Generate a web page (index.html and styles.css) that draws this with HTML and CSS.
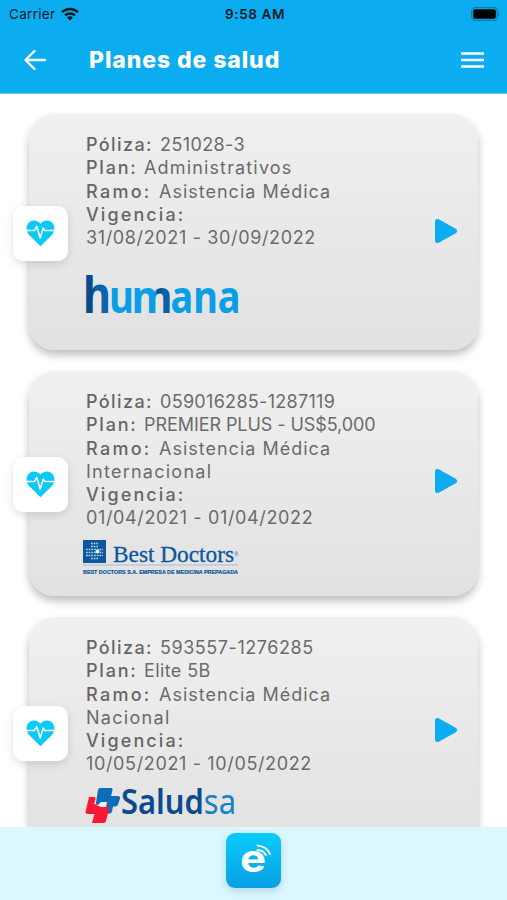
FILE: index.html
```html
<!DOCTYPE html>
<html lang="es">
<head>
<meta charset="utf-8">
<meta name="viewport" content="width=device-width, initial-scale=1">
<title>Planes de salud</title>
<link rel="stylesheet" href="styles.css">
</head>
<body>
<svg class="defs" aria-hidden="true">
  <symbol id="heart" viewBox="0 0 29 27">
    <path d="M14.5 26.2 3.1 14.9C-1.5 10.2 .3 .5 8 .5c3 0 5 1.3 6.5 3.2C16 1.800 18 .5 21 .5c7.700 0 9.500 9.700 4.900 14.400Z" fill="#0cc9f7"/>
    <path d="M0 10.500h8.500l2.200-4.200 3.500 11.700 3-10 1.300 2.500H29" fill="none" stroke="#fff" stroke-width="1.500" stroke-linejoin="round"/>
  </symbol>
  <symbol id="play" viewBox="0 0 24 26">
    <path d="M3.500 3.500v19l17-9.500Z" fill="#0cadf0" stroke="#0cadf0" stroke-width="5" stroke-linejoin="round"/>
  </symbol>
  <linearGradient id="m-fill">
    <stop offset=".6" stop-color="#0a9fe5"/>
    <stop offset=".62" stop-color="#084b8b"/>
    <stop offset=".8" stop-color="#0760a8"/>
  </linearGradient>
  <linearGradient id="h-fill">
    <stop offset=".3" stop-color="#084b8b"/>
    <stop offset=".5" stop-color="#0863ab"/>
  </linearGradient>
</svg>
<div class="app">
  <header class="top">
    <div class="status">
      <span class="carrier">Carrier
        <svg class="wifi" width="18" height="14" viewBox="0 0 18 14"><g fill="none" stroke="#071923" stroke-width="2.500"><path d="M1 5.200a11.400 11.400 0 0 1 16 0"/><path d="M4 8.400a7.200 7.200 0 0 1 10 0"/></g><path d="M9 13.500 6 10.600a4.200 4.200 0 0 1 6 0Z" fill="#071923"/></svg>
      </span>
      <span class="clock">9:58 AM</span>
      <svg class="battery" width="30" height="14" viewBox="0 0 30 14"><rect x=".7" y=".7" width="25.600" height="12.600" rx="3.500" fill="none" stroke="#087ead" stroke-width="1.300"/><rect x="2.200" y="2.200" width="22.600" height="9.600" rx="2" fill="#000"/><path d="M27.300 4.500q2.400 2.500 0 5Z" fill="#087ead"/></svg>
    </div>
    <nav class="bar">
      <svg width="22" height="20" viewBox="0 0 22 20"><path d="M21 10H2M10.500 1 1.500 10l9 9" fill="none" stroke="#fff" stroke-width="2.300" stroke-linecap="round" stroke-linejoin="round"/></svg>
      <h1>Planes de salud</h1>
      <svg class="menu" width="23" height="16" viewBox="0 0 23 16"><path d="M0 1.500h23M0 8h23M0 14.500h23" stroke="#fff" stroke-width="2.500"/></svg>
    </nav>
  </header>

  <main class="list">
    <article class="card first">
      <div class="tile"><svg width="29" height="27"><use href="#heart"/></svg></div>
      <div class="body">
        <p><b class="poliza">Póliza:</b><span class="num-a">251028-3</span></p>
        <p><b class="plan">Plan:</b><span class="adm">Administrativos</span></p>
        <p><b class="ramo">Ramo:</b><span class="asis">Asistencia Médica</span></p>
        <p><b class="vig">Vigencia:</b></p>
        <p><span class="date">31/08/2021 - 30/09/2022</span></p>
        <svg class="logo humana" width="154" height="44" viewBox="0 0 154 44">
          <text class="hum-h" x="-3" y="39.500" textLength="28" lengthAdjust="spacingAndGlyphs">h</text>
          <text class="hum" x="23" y="39.500" textLength="25" lengthAdjust="spacingAndGlyphs">u</text>
          <text class="hum hum-m" x="45.500" y="39.500" textLength="41" lengthAdjust="spacingAndGlyphs">m</text>
          <text class="hum" x="84.500" y="39.500" textLength="70" lengthAdjust="spacingAndGlyphs">ana</text>
        </svg>
      </div>
      <svg class="go" width="24" height="26"><use href="#play"/></svg>
    </article>

    <article class="card second">
      <div class="tile"><svg width="29" height="27"><use href="#heart"/></svg></div>
      <div class="body">
        <p><b class="poliza">Póliza:</b><span class="num-b">059016285-1287119</span></p>
        <p><b class="plan">Plan:</b><span class="premier">PREMIER PLUS - US$5,000</span></p>
        <p><b class="ramo">Ramo:</b><span class="asis">Asistencia Médica</span></p>
        <p><span class="inter">Internacional</span></p>
        <p><b class="vig">Vigencia:</b></p>
        <p><span class="date">01/04/2021 - 01/04/2022</span></p>
        <svg class="logo doctors" width="158" height="36" viewBox="0 0 158 36">
          <rect x="1" width="23" height="23" fill="#0b569c"/>
          <path d="M9 3.500h7M9 6.500h7M4 9.500h17M4 12.500h17M4 15.500h17M9 18.500h7" stroke="#b9d8ec" stroke-width="1.700" stroke-dasharray="1.700 1"/>
          <circle cx="15.500" cy="11.500" r="2" fill="#d9edf8"/>
          <text class="serif" x="31" y="21.800" textLength="121" lengthAdjust="spacingAndGlyphs">Best Doctors</text>
          <text class="reg" x="152.500" y="16">®</text>
          <path d="M1 25h155" stroke="#a9bdcf"/>
          <text class="tiny" x="1" y="33.500" textLength="155" lengthAdjust="spacingAndGlyphs">BEST DOCTORS S.A. EMPRESA DE MEDICINA PREPAGADA</text>
        </svg>
      </div>
      <svg class="go" width="24" height="26"><use href="#play"/></svg>
    </article>

    <article class="card third">
      <div class="tile"><svg width="29" height="27"><use href="#heart"/></svg></div>
      <div class="body">
        <p><b class="poliza">Póliza:</b><span class="num-c">593557-1276285</span></p>
        <p><b class="plan">Plan:</b><span class="elite">Elite 5B</span></p>
        <p><b class="ramo">Ramo:</b><span class="asis">Asistencia Médica</span></p>
        <p><span class="nac">Nacional</span></p>
        <p><b class="vig">Vigencia:</b></p>
        <p><span class="date">10/05/2021 - 10/05/2022</span></p>
        <svg class="logo saludsa" width="154" height="38" viewBox="0 0 154 38">
          <path d="M15 1h11q2 0 1.500 2L26 9h7q2.500 0 2 2.500l-2 6q-.7 2-3 2h-2l-1 5q-.5 2-2.500 2H17q-2 0-1.500-2L17 18h-4q-2.500 0-2-2.500L13 3q.5-2 2-2Z" fill="#0d6db8"/>
          <path d="M4 10h5q2 0 1.500 2L9 17h7l2-2 4 2-1 3h2q1.500 0 1 2l-3 12q-.5 2-2.500 2H7l2.500-9H3q-3 0-2.300-3Z" fill="#fb1834"/>
          <path d="m9 17 4 1 3-3h6l-1 5h-5Z" fill="#e8f3f8"/>
          <text class="salud" x="36" y="27" textLength="115" lengthAdjust="spacingAndGlyphs">Salud<tspan class="sa">sa</tspan></text>
        </svg>
      </div>
      <svg class="go" width="24" height="26"><use href="#play"/></svg>
    </article>
  </main>

  <footer class="dock">
    <div class="home">
      <svg width="55" height="55" viewBox="0 0 55 55"><text class="e" x="14" y="38.500" textLength="26" lengthAdjust="spacingAndGlyphs">e</text><path d="M31.500 12.500q9 .8 12.500 8.500M31.500 17q6 .3 8.300 5" fill="none" stroke="#e8faff" stroke-width="2" stroke-linecap="round"/></svg>
    </div>
  </footer>
</div>
</body>
</html>
```
FILE: styles.css
```css
* { box-sizing: border-box; }
body { margin: 0; background: #fff; font-family: Inter, "Liberation Sans", sans-serif; }
.defs { position: absolute; width: 0; height: 0; }
.app { height: 900px; display: flex; flex-direction: column; overflow: hidden; }

.top { flex: none; height: 94px; background: #0cadf0; border-bottom: 1px solid #66cef6; }
.status { height: 28px; display: grid; grid-template-columns: 1fr auto 1fr; align-items: center; padding: 0 6px 0 9px; color: #071923; font-size: 13.5px; }
.carrier { display: flex; align-items: center; gap: 6px; letter-spacing: .3px; }
.clock { font-weight: 600; font-size: 13.5px; letter-spacing: .6px; }
.battery { justify-self: end; }
.bar { display: flex; align-items: center; height: 63px; padding: 0 23px 0 24px; }
.bar h1 { margin: 0 0 0 43px; color: #fff; font-size: 23px; font-weight: 800; line-height: 30px; letter-spacing: .9px; }
.menu { margin-left: auto; }

.list { flex: 1; min-height: 0; overflow: hidden; padding: 20px 29px 0; display: flex; flex-direction: column; gap: 21px; }
.card { flex: none; display: flex; width: 449px; border-radius: 26px; background: linear-gradient(#f0f0f0, #e1e1e1); box-shadow: 0 5px 9px rgba(0, 0, 0, .26); }
.first { height: 236px; }
.second { height: 225px; }
.third { height: 236px; }
.tile { flex: none; width: 55px; height: 55px; margin: 92px 18px 0 -16px; border-radius: 10px; background: #fff; display: grid; place-items: center; box-shadow: 0 3px 8px rgba(0, 0, 0, .13); }
.second .tile { margin-top: 86px; }
.third .tile { margin-top: 89px; }
.body { flex: 1; padding-top: 19.2px; color: #6b6b6b; font-size: 18px; }
.body p { margin: 0; height: 23.2px; line-height: 23.2px; white-space: nowrap; }
.body b { display: inline-block; font-weight: 500; letter-spacing: 1.4px; color: #666; }
.poliza { width: 74px; }
.body .plan { width: 58px; letter-spacing: 1.8px; }
.body .ramo { width: 73px; letter-spacing: 2.3px; }
.body .vig { letter-spacing: 2.1px; }
.num-a { letter-spacing: .4px; }
.num-b { letter-spacing: .3px; }
.num-c { letter-spacing: .55px; }
.adm { letter-spacing: 1.15px; }
.asis { letter-spacing: 1px; }
.premier { letter-spacing: -.07px; }
.inter { letter-spacing: 1.25px; }
.nac { letter-spacing: 1.3px; }
.elite { letter-spacing: .4px; }
.date { letter-spacing: .64px; }
.logo { display: block; overflow: visible; }
.humana { margin-top: 24px; }
.doctors { margin: 10.600px 0 0 -4px; }
.saludsa { margin: 11.400px 0 0 -1px; }
.go { flex: none; margin: 104px 20px 0 0; }
.second .go { margin-top: 97px; }
.third .go { margin-top: 100px; }

.hum, .hum-h { font: 700 45px "Noto Sans", sans-serif; fill: #0a9fe5; }
.hum-h { font-size: 51px; fill: url(#h-fill); }
.hum-m { fill: url(#m-fill); }
.serif { font: 24px "Liberation Serif", serif; fill: #0b569c; stroke: #0b569c; stroke-width: .3px; }
.reg { font: 5px "Liberation Sans", sans-serif; fill: #0b569c; }
.tiny { font: 700 5.500px "Liberation Sans", sans-serif; fill: #0b569c; stroke: #0b569c; stroke-width: .2px; }
.salud { font: 600 34px "Noto Sans", sans-serif; fill: #0b4b8d; }
.sa { font-weight: 400; fill: #1581c4; }
.e { font: 700 39px Inter, sans-serif; fill: #fff; }

.dock { flex: none; height: 73px; background: #dbf8ff; display: flex; justify-content: center; padding-top: 6px; }
.home { width: 55px; height: 55px; border-radius: 9px; background: linear-gradient(#08ccfa, #0a9fe5); box-shadow: 0 3px 8px rgba(0, 80, 110, .2); }
```
